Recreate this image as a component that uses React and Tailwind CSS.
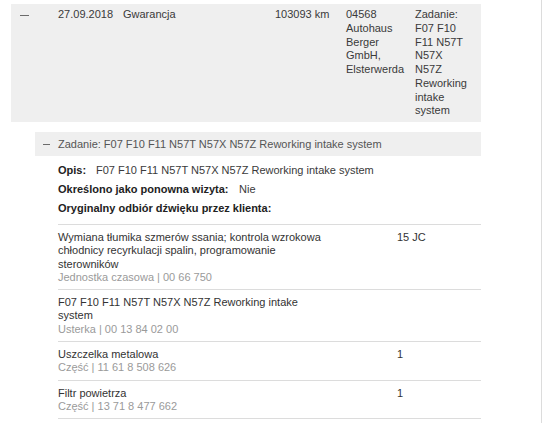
const FONT = { fontFamily: '"Liberation Sans", Arial, sans-serif' }

const items = [
  {
    title: 'Wymiana tłumika szmerów ssania; kontrola wzrokowa chłodnicy recyrkulacji spalin, programowanie sterowników',
    meta: 'Jednostka czasowa | 00 66 750',
    qty: '15 JC',
  },
  {
    title: 'F07 F10 F11 N57T N57X N57Z Reworking intake system',
    meta: 'Usterka | 00 13 84 02 00',
    qty: '',
  },
  { title: 'Uszczelka metalowa', meta: 'Część | 11 61 8 508 626', qty: '1' },
  { title: 'Filtr powietrza', meta: 'Część | 13 71 8 477 662', qty: '1' },
]

function Minus({ w }) {
  return <span className="block h-px bg-[#6b6b6b]" style={{ width: w }} />
}

function ItemRow({ item }) {
  return (
    <div className="flex border-t border-[#dcdcdc] pt-[6px] pb-[5px] text-[11px] leading-[13.3px]">
      <div className="w-[268px] text-[#333]">
        <div>{item.title}</div>
        <div className="text-[#9a9a9a]">{item.meta}</div>
      </div>
      <div className="ml-[71px] text-[#333]">{item.qty}</div>
    </div>
  )
}

export default function App() {
  return (
    <div className="min-h-[423px] w-[542px] border-r border-[#dcdcdc] bg-white pt-[4px]" style={FONT}>
      {/* main visit row */}
      <div className="ml-[11px] w-[470px] bg-[#efefef] pt-[4px] pb-[4px] text-[11px] leading-[13.75px] text-[#3a3a3a]">
        <div className="flex">
          <div className="w-[47px] pl-[9px] pt-[7px]">
            <Minus w="9px" />
          </div>
          <div className="w-[65px]">27.09.2018</div>
          <div className="w-[152px]">Gwarancja</div>
          <div className="w-[71px]">103093 km</div>
          <div className="mr-[9px] w-[60px]">04568 Autohaus Berger GmbH, Elsterwerda</div>
          <div className="w-[54px]">Zadanie: F07 F10 F11 N57T N57X N57Z Reworking intake system</div>
        </div>
      </div>

      {/* job detail */}
      <div className="ml-[35px] mt-[10px] w-[446px]">
        <div className="flex h-[24px] items-center bg-[#efefef] text-[11px] text-[#555]">
          <div className="w-[23px] pl-[8px]">
            <Minus w="7px" />
          </div>
          <span>Zadanie: F07 F10 F11 N57T N57X N57Z Reworking intake system</span>
        </div>

        <div className="pl-[23px]">
          <div className="flex flex-col gap-[6px] pt-[8px] pb-[9px] text-[11px] leading-[13px] text-[#222]">
            <div className="flex">
              <span className="w-[38px] font-bold">Opis:</span>
              <span className="text-[#3a3a3a]">F07 F10 F11 N57T N57X N57Z Reworking intake system</span>
            </div>
            <div className="flex">
              <span className="w-[181px] font-bold">Określono jako ponowna wizyta:</span>
              <span className="text-[#3a3a3a]">Nie</span>
            </div>
            <div className="font-bold">Oryginalny odbiór dźwięku przez klienta:</div>
          </div>

          {items.map(item => (
            <ItemRow key={item.meta} item={item} />
          ))}
          <div className="border-t border-[#dcdcdc]" />
        </div>
      </div>
    </div>
  )
}
